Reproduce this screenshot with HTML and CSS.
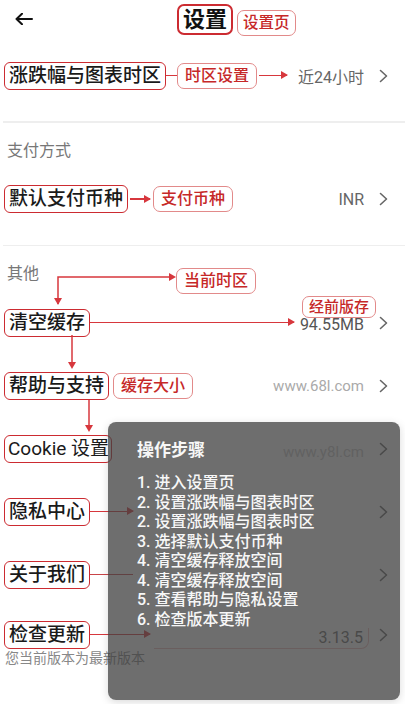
FILE: index.html
```html
<!DOCTYPE html>
<html>
<head>
    <meta charset="utf-8">
    <title>设置</title>
    <meta name="viewport" content="width=device-width, initial-scale=1">
    <link rel="stylesheet" href="styles.css">
</head>

<body>
    <div class="page">
        <div class="header">
            <svg class="back" width="18" height="12" viewBox="0 0 18 12">
                <path d="M17 6H1.5M7 0.8L1.5 6 7 11.2" fill="none" stroke="#111" stroke-width="2" stroke-linecap="round" stroke-linejoin="round"/>
            </svg>
            <div class="title-box">设置</div>
            <div class="tag tag-title">设置页</div>
        </div>

        <div class="row">
            <span class="label-box">涨跌幅与图表时区</span>
            <span class="link link-short"></span>
            <span class="tag">时区设置</span>
            <span class="arrow arrow-28"></span>
            <span class="spacer"></span>
            <span class="value">近24小时</span>
            <svg class="chevron" width="9" height="14" viewBox="0 0 9 14"><path d="M1.5 1.5L7.5 7 1.5 12.5" fill="none" stroke="#666" stroke-width="1.6" stroke-linecap="round" stroke-linejoin="round"/></svg>
        </div>

        <div class="divider"></div>
        <div class="section-title">支付方式</div>

        <div class="row">
            <span class="label-box">默认支付币种</span>
            <span class="arrow arrow-20"></span>
            <span class="tag">支付币种</span>
            <span class="spacer"></span>
            <span class="value">INR</span>
            <svg class="chevron" width="9" height="14" viewBox="0 0 9 14"><path d="M1.5 1.5L7.5 7 1.5 12.5" fill="none" stroke="#666" stroke-width="1.6" stroke-linecap="round" stroke-linejoin="round"/></svg>
        </div>

        <div class="divider"></div>
        <div class="section-title">
            <span>其他</span>
            <span class="tag tag-zone">当前时区</span>
        </div>

        <div class="row">
            <span class="label-box">清空缓存</span>
            <span class="arrow arrow-fill"></span>
            <span class="value value-cache">
                94.55MB
                <span class="tag tag-small">经前版存</span>
            </span>
            <svg class="chevron" width="9" height="14" viewBox="0 0 9 14"><path d="M1.5 1.5L7.5 7 1.5 12.5" fill="none" stroke="#666" stroke-width="1.6" stroke-linecap="round" stroke-linejoin="round"/></svg>
        </div>

        <div class="row">
            <span class="label-box">帮助与支持</span>
            <span class="tag tag-next">缓存大小</span>
            <span class="spacer"></span>
            <span class="value value-light">www.68l.com</span>
            <svg class="chevron" width="9" height="14" viewBox="0 0 9 14"><path d="M1.5 1.5L7.5 7 1.5 12.5" fill="none" stroke="#666" stroke-width="1.6" stroke-linecap="round" stroke-linejoin="round"/></svg>
        </div>

        <div class="row">
            <span class="label-box label-cookie">Cookie 设置</span>
            <span class="spacer"></span>
            <span class="value value-faint">www.y8l.cm</span>
            <svg class="chevron" width="9" height="14" viewBox="0 0 9 14"><path d="M1.5 1.5L7.5 7 1.5 12.5" fill="none" stroke="#666" stroke-width="1.6" stroke-linecap="round" stroke-linejoin="round"/></svg>
        </div>

        <div class="row">
            <span class="label-box">隐私中心</span>
            <span class="arrow arrow-43"></span>
            <span class="spacer"></span>
            <svg class="chevron" width="9" height="14" viewBox="0 0 9 14"><path d="M1.5 1.5L7.5 7 1.5 12.5" fill="none" stroke="#666" stroke-width="1.6" stroke-linecap="round" stroke-linejoin="round"/></svg>
        </div>

        <div class="row">
            <span class="label-box">关于我们</span>
            <span class="link link-43"></span>
            <span class="spacer"></span>
            <svg class="chevron" width="9" height="14" viewBox="0 0 9 14"><path d="M1.5 1.5L7.5 7 1.5 12.5" fill="none" stroke="#666" stroke-width="1.6" stroke-linecap="round" stroke-linejoin="round"/></svg>
        </div>

        <div class="row row-update">
            <div class="row-line">
                <span class="label-box">检查更新</span>
                <span class="arrow arrow-60"></span>
                <span class="spacer"></span>
                <span class="version-mark">
                    <span class="value value-version">3.13.5</span>
                </span>
                <svg class="chevron" width="9" height="14" viewBox="0 0 9 14"><path d="M1.5 1.5L7.5 7 1.5 12.5" fill="none" stroke="#666" stroke-width="1.6" stroke-linecap="round" stroke-linejoin="round"/></svg>
            </div>
            <div class="note">您当前版本为最新版本</div>
        </div>

        <!-- vertical annotation arrows -->
        <svg class="marks" width="405" height="704" viewBox="0 0 405 704">
            <g fill="none" stroke="#d7373d" stroke-width="1.5">
                <path d="M58 304V277H170"/>
                <path d="M72 335V365"/>
                <path d="M89 400V428"/>
            </g>
            <g fill="#d7373d">
                <path d="M176 277l-7-4v8z"/>
                <path d="M58 305l-4-7h8z"/>
                <path d="M72 369l-4-7h8z"/>
                <path d="M89 432l-4-7h8z"/>
            </g>
        </svg>

        <div class="panel">
            <div class="panel-title">操作步骤</div>
            <div class="steps">
                <div>1. 进入设置页</div>
                <div>2. 设置涨跌幅与图表时区</div>
                <div>2. 设置涨跌幅与图表时区</div>
                <div>3. 选择默认支付币种</div>
                <div>4. 清空缓存释放空间</div>
                <div>4. 清空缓存释放空间</div>
                <div>5. 查看帮助与隐私设置</div>
                <div>6. 检查版本更新</div>
            </div>
        </div>
    </div>
</body>
</html>
```

FILE: styles.css
```css
* {
    box-sizing: border-box;
}

body {
    margin: 0;
    font-family: Roboto, "Noto Sans CJK SC", sans-serif;
    background-color: #fff;
    color: #1a1a1a;
}

.page {
    position: relative;
    width: 405px;
    height: 704px;
    overflow: hidden;
}

.header {
    display: grid;
    grid-template-columns: 1fr auto 1fr;
    align-items: start;
    height: 44px;
    padding: 4px 0 0 5px;
}

.back {
    margin: 9px 0 0 10px;
}

.title-box {
    font-size: 22px;
    font-weight: bold;
    line-height: 27px;
    padding: 0 4px;
    border: 2px solid #cc2b31;
    border-radius: 7px;
    color: #111;
}

.tag {
    font-size: 16px;
    font-weight: 500;
    line-height: 24px;
    padding: 0 7px;
    border: 1px solid #e28a8a;
    border-radius: 7px;
    background-color: #fff;
    color: #c62828;
    white-space: nowrap;
}

.tag-title {
    justify-self: start;
    margin: 6px 0 0 4px;
    font-size: 15.5px;
    padding: 0 5px;
}

.row {
    display: flex;
    align-items: center;
    height: 63px;
    padding: 0 17px 0 4px;
}

.label-box {
    font-size: 19px;
    font-weight: 500;
    line-height: 26px;
    padding: 0 4px;
    border: 1.5px solid #cc2b31;
    border-radius: 6px;
    color: #1a1a1a;
    white-space: nowrap;
}

.label-cookie {
    padding: 0 2px 0 3px;
    font-weight: 400;
}

.link {
    height: 1.5px;
    background-color: #d7373d;
}

.link-short {
    width: 11px;
}

.link-43 {
    width: 43px;
    background-color: #c94448;
}

.arrow {
    position: relative;
    height: 1.5px;
    background-color: #d7373d;
}

.arrow::after {
    content: "";
    position: absolute;
    right: -1px;
    top: -3.5px;
    border-left: 7px solid #d7373d;
    border-top: 4px solid transparent;
    border-bottom: 4px solid transparent;
}

.arrow-28 {
    width: 28px;
    margin-left: 2px;
}

.arrow-20 {
    width: 20px;
    margin: 0 3px 0 2px;
}

.arrow-fill {
    flex: 1;
    margin-right: 6px;
}

.arrow-43 {
    width: 43px;
}

.arrow-60 {
    width: 60px;
    flex-shrink: 0;
}

.spacer {
    flex: 1;
}

.value {
    font-size: 16px;
    color: #666;
    margin-right: 15px;
    white-space: nowrap;
}

.value-cache {
    position: relative;
    color: #555;
    margin-top: 3px;
}

.tag-small {
    position: absolute;
    left: 2px;
    bottom: calc(100% - 3px);
    font-size: 15px;
    line-height: 20px;
    padding: 0 6px;
}

.value-light {
    font-size: 15px;
    color: #aaa;
}

.value-faint {
    font-size: 15px;
    color: #c8c8c8;
    margin-top: 6px;
}

.version-mark {
    margin: 8px 10px 0 0;
    padding: 0 0 1px 165px;
    border-bottom: 1px solid rgba(200, 60, 60, 0.35);
    border-right: 1px solid rgba(200, 60, 60, 0.35);
    border-bottom-right-radius: 8px;
}

.value-version {
    margin-right: 5px;
}

.tag-next {
    margin-left: 4px;
}

.chevron {
    flex-shrink: 0;
}

.divider {
    height: 1.5px;
    margin: 14px 0 0 3px;
    background-color: #eee;
}

.section-title {
    display: flex;
    align-items: flex-start;
    height: 45px;
    padding: 16px 0 0 7px;
    font-size: 16px;
    line-height: 24px;
    color: #777;
}

.tag-zone {
    margin: 6px 0 0 137px;
}

.row-update {
    flex-direction: column;
    align-items: stretch;
    padding-top: 14px;
}

.row-line {
    display: flex;
    align-items: center;
}

.note {
    padding-left: 1px;
    font-size: 14px;
    line-height: 18px;
    color: #888;
}

.marks {
    position: absolute;
    left: 0;
    top: 0;
    pointer-events: none;
}

.panel {
    position: absolute;
    left: 108px;
    top: 422px;
    width: 292px;
    height: 278px;
    padding: 16px 20px 0 29px;
    background-color: rgba(64, 64, 64, 0.76);
    border-radius: 8px;
    box-shadow: 0 2px 8px rgba(0, 0, 0, 0.15);
    color: #f7f7f7;
}

.panel-title {
    font-size: 17px;
    font-weight: bold;
    line-height: 24px;
}

.steps {
    margin-top: 11px;
    font-size: 16px;
    font-weight: 500;
    line-height: 19.5px;
}
```
